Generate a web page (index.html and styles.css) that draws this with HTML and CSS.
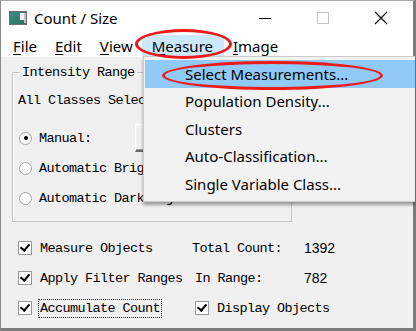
FILE: index.html
```html
<!DOCTYPE html>
<html lang="en">
<head>
    <meta charset="UTF-8">
    <meta name="viewport" content="width=device-width, initial-scale=1.0">
    <title>Count / Size</title>
    <link rel="stylesheet" href="styles.css">
</head>
<body>

    <div class="window">

        <!-- Title bar -->
        <div class="titlebar">
            <svg class="app-icon" width="18" height="14" viewBox="0 0 18 14">
                <defs>
                    <linearGradient id="ig" x1="0" y1="0" x2="1" y2="1">
                        <stop offset="0" stop-color="#3f8f88"/>
                        <stop offset="1" stop-color="#2b6e5c"/>
                    </linearGradient>
                </defs>
                <rect x="0.5" y="0.5" width="17" height="13" fill="url(#ig)" stroke="#6b6b6b"/>
                <rect x="11" y="2" width="4" height="7" fill="#f4f4f4"/>
                <rect x="15" y="2" width="2" height="10" fill="#b9c9c6"/>
            </svg>
            <span class="title">Count / Size</span>
            <div class="controls">
                <span class="ctl">
                    <svg width="14" height="14" viewBox="0 0 14 14"><path d="M1 7.5h12" stroke="#000" stroke-width="1"/></svg>
                </span>
                <span class="ctl">
                    <svg width="14" height="14" viewBox="0 0 14 14"><rect x="1.5" y="1.5" width="11" height="11" fill="none" stroke="#c4c4c4"/></svg>
                </span>
                <span class="ctl">
                    <svg width="14" height="14" viewBox="0 0 14 14"><path d="M1 1L13 13M13 1L1 13" stroke="#000" stroke-width="1.1"/></svg>
                </span>
            </div>
        </div>

        <!-- Menu bar -->
        <div class="menubar">
            <span class="menu-item"><u>F</u>ile</span>
            <span class="menu-item"><u>E</u>dit</span>
            <span class="menu-item"><u>V</u>iew</span>
            <span class="menu-item active"><u>M</u>easure</span>
            <span class="menu-item"><u>I</u>mage</span>
        </div>

        <!-- Dialog body -->
        <div class="client">
            <div class="group">
                <div class="group-title">Intensity Range</div>
                <div class="group-line">All Classes Selected</div>
                <div class="radio-row">
                    <span class="radio checked"></span>Manual:
                    <span class="field"></span>
                </div>
                <div class="radio-row"><span class="radio"></span>Automatic Bright Objects</div>
                <div class="radio-row"><span class="radio"></span>Automatic Dark Objects</div>
            </div>

            <div class="options">
                <div class="check-row"><span class="check"></span>Measure Objects</div>
                <div class="stat">Total Count:</div>
                <div class="num">1392</div>

                <div class="check-row"><span class="check"></span>Apply Filter Ranges</div>
                <div class="stat shift">In Range:</div>
                <div class="num">782</div>

                <div class="check-row"><span class="check"></span><span class="focus">Accumulate Count</span></div>
                <div class="check-row shift"><span class="check"></span>Display Objects</div>
                <div></div>
            </div>
        </div>
    </div>

    <!-- Open Measure menu -->
    <div class="dropdown">
        <div class="drop-item selected">Select Measurements...</div>
        <div class="drop-item">Population Density...</div>
        <div class="drop-item">Clusters</div>
        <div class="drop-item">Auto-Classification...</div>
        <div class="drop-item">Single Variable Class...</div>
    </div>

    <!-- Red annotation rings -->
    <div class="ring ring-menu"></div>
    <div class="ring ring-item"></div>

</body>
</html>
```

FILE: styles.css
```css
body {
    margin: 0;
    padding: 0;
    width: 416px;
    height: 331px;
    overflow: hidden;
    position: relative;
    background: #fff;
}
.window {
    width: 416px;
    height: 331px;
    box-sizing: border-box;
    border-left: 1px solid #8c8c8c;
    border-top: 1px solid #a8a8a8;
    border-right: 3px solid #7c7c7c;
    border-bottom: 3px solid #7c7c7c;
    background-color: #f0f0f0;
    overflow: hidden;
}

/* Title bar */
.titlebar {
    height: 33px;
    background: #fff;
    display: flex;
    align-items: center;
}
.app-icon {
    margin-left: 8px;
}
.title {
    margin-left: 7px;
    font-family: "Noto Sans", sans-serif;
    font-size: 15px;
    color: #000;
}
.controls {
    margin-left: auto;
    margin-right: 3px;
    display: flex;
    height: 100%;
}
.ctl {
    width: 58px;
    display: flex;
    align-items: center;
    justify-content: center;
}

/* Menu bar */
.menubar {
    height: 23px;
    background: #fff;
    display: flex;
    padding-left: 3px;
    font-family: "Noto Sans", sans-serif;
    font-size: 15px;
}
.menu-item {
    padding: 0 9px;
    line-height: 22px;
    margin-top: 1px;
    color: #000;
}
.menu-item u {
    text-decoration-thickness: 1px;
    text-underline-offset: 2px;
}
.menu-item.active {
    background: #cce8ff;
    padding: 0 11px 0 10px;
}

/* Client area */
.client {
    padding-left: 11px;
    font-family: "Liberation Mono", monospace;
    font-size: 13.5px;
    letter-spacing: -0.6px;
    color: #000;
}
.group {
    margin-top: 15px;
    width: 280px;
    box-sizing: border-box;
    border: 1px solid #c4c4c4;
    box-shadow: inset 1px 1px #fff;
    padding: 0 5px 8px 5px;
}
.group-title {
    display: table;
    margin: -8px 0 0 2px;
    padding: 0 2px;
    line-height: 16px;
    background-color: #f0f0f0;
}
.group-line {
    margin-top: 12px;
    line-height: 16px;
    white-space: nowrap;
    overflow: hidden;
}
.group-line + .radio-row {
    margin-top: 14px;
}
.radio-row {
    height: 30px;
    display: flex;
    align-items: center;
    white-space: nowrap;
    overflow: hidden;
}
.radio {
    flex-shrink: 0;
    width: 11px;
    height: 11px;
    margin: 0 7px 0 1px;
    border: 1px solid #a4a4a4;
    border-radius: 50%;
    background: #fff;
    display: flex;
    align-items: center;
    justify-content: center;
}
.radio.checked::after {
    content: "";
    width: 4px;
    height: 4px;
    border-radius: 50%;
    background: #000;
}
.field {
    flex-shrink: 0;
    margin-left: 43px;
    width: 80px;
    height: 28px;
    box-sizing: border-box;
    background: #f0f0f0;
    border: 1px solid #fff;
    border-right-color: #696969;
    border-bottom: 2px solid #696969;
    box-shadow: inset -1px -1px #a0a0a0;
}

/* Checkboxes and counts */
.options {
    margin-top: 11px;
    padding-left: 6px;
    display: grid;
    grid-template-columns: 174px 112px auto;
    grid-auto-rows: 30px;
    align-items: center;
}
.check-row {
    display: flex;
    align-items: center;
    white-space: nowrap;
}
.check {
    flex-shrink: 0;
    width: 12px;
    height: 12px;
    margin-right: 8px;
    border: 1px solid #9a9a9a;
    background: #fff;
    position: relative;
}
.check::after {
    content: "";
    position: absolute;
    left: 3px;
    top: 0px;
    width: 4px;
    height: 7px;
    border-right: 2px solid #000;
    border-bottom: 2px solid #000;
    transform: rotate(40deg);
}
.focus {
    outline: 1px dotted #333;
    outline-offset: 1px;
}
.shift {
    padding-left: 3px;
}
.num {
    font-family: "Liberation Sans", sans-serif;
    font-size: 14px;
    letter-spacing: 0;
}

/* Dropdown menu, drawn over the window edge up to the frame edge */
.dropdown {
    position: absolute;
    left: 143px;
    top: 56px;
    width: 270px;
    padding: 3px 0 3px 1px;
    background: #f2f2f2;
    border: 1px solid #cccccc;
    border-right: 0;
    box-shadow: 0 3px 3px rgba(0, 0, 0, 0.35);
    font-family: "Noto Sans", sans-serif;
    font-size: 15px;
    color: #000;
}
.drop-item {
    height: 27.5px;
    line-height: 27.5px;
    padding-left: 40px;
}
.drop-item.selected {
    background: #91c9f7;
    height: 28px;
    line-height: 28px;
}

/* Annotation rings */
.ring {
    position: absolute;
    box-sizing: border-box;
    border: 3px solid #ec1b1b;
    border-radius: 50%;
}
.ring-menu {
    left: 135px;
    top: 29px;
    width: 97px;
    height: 30px;
}
.ring-item {
    left: 162px;
    top: 61px;
    width: 221px;
    height: 29px;
}
```
